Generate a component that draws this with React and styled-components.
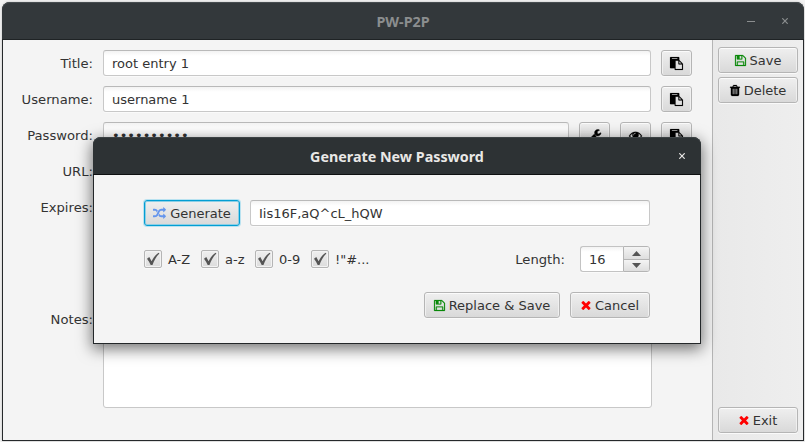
import React from "react";
import styled, { createGlobalStyle } from "styled-components";

const GlobalStyle = createGlobalStyle`
  * { box-sizing: border-box; }
  body { margin: 0; background: #f3f3f3; }
`;

const Desktop = styled.div`
  width: 805px;
  height: 442px;
  padding: 2px 1px 1px 2px;
  overflow: hidden;
  background: #f3f3f3;
  font-family: "DejaVu Sans", sans-serif;
  font-size: 13px;
  color: #333;
`;

const Window = styled.main`
  position: relative;
  width: 802px;
  height: 439px;
  display: flex;
  flex-direction: column;
  border: 1px solid #26292b;
  border-top: 0;
  border-radius: 8px 8px 0 0;
  background: #f4f4f4;
  box-shadow: 0 0 3px rgba(0, 0, 0, 0.22);
`;

const TitleBar = styled.header`
  flex: none;
  height: 38px;
  margin: 0 -1px;
  padding: 0 16px;
  display: grid;
  grid-template-columns: 72px 1fr 72px;
  align-items: center;
  border-radius: 8px 8px 0 0;
  border-bottom: 1px solid ${(p) => (p.$active ? "#0e1011" : "#1f2325")};
  background: ${(p) => (p.$active ? "#2d3234" : "#33383b")};
  box-shadow: inset 0 1px 0 ${(p) => (p.$active ? "#3c4244" : "#474d50")};
  color: ${(p) => (p.$active ? "#e9e8e6" : "#8b8e8f")};
`;

const WindowTitle = styled.h1`
  grid-column: 2;
  margin: 0;
  padding-top: 2px;
  text-align: center;
  white-space: nowrap;
  font: 700 14.3px / 20px "Noto Sans", sans-serif;
`;

const WindowControls = styled.div`
  display: flex;
  justify-content: flex-end;
  align-items: center;
  gap: 27px;
  svg { display: block; }
`;

const Body = styled.div`
  flex: 1;
  min-height: 0;
  display: flex;
`;

const Form = styled.section`
  flex: 1;
  padding: 10px 20px 32px 10px;
  display: flex;
  flex-direction: column;
  gap: 10px;
`;

const Row = styled.div`
  display: flex;
  align-items: center;
  gap: 10px;
  height: ${(p) => (p.$tall ? "178px" : "26px")};
`;

const Label = styled.label`
  flex: none;
  width: ${(p) => p.$width || "80px"};
  padding-top: 1px;
  text-align: right;
  font-size: 13.15px;
  line-height: 19px;
`;

const Field = styled.div`
  flex: 1;
  height: 26px;
  padding: 0 8px;
  display: flex;
  align-items: center;
  border: 1px solid #c8c8c8;
  border-top-color: #b9b9b9;
  border-radius: 3px;
  background: linear-gradient(#f3f3f3, #fff 5px);
  box-shadow: 0 1px 0 #fafafa;
  white-space: pre;
`;

const NotesArea = styled.div`
  width: 549px;
  height: 178px;
  border: 1px solid #c8c8c8;
  border-radius: 3px;
  background: #fff;
`;

const Spacer = styled.div`
  width: ${(p) => p.$width || "31px"};
`;

const Button = styled.button`
  flex: none;
  width: ${(p) => p.$width || "31px"};
  height: 26px;
  margin: 0;
  padding: 0;
  display: flex;
  align-items: center;
  justify-content: center;
  gap: 4px;
  border: 1px solid ${(p) => (p.$focused ? "#039ed3" : "#b5b5b5")};
  border-radius: 3px;
  background: linear-gradient(#efefef, #d9d9d9);
  box-shadow: ${(p) =>
    p.$focused
      ? "0 0 0 1px #b9e2f0, inset 0 0 0 1px #8ccfe6"
      : "inset 0 1px 0 #fbfbfb, inset 1px 0 0 #f0f0f0, inset -1px 0 0 #f0f0f0, 0 1px 0 #fafafa"};
  color: #333;
  font: inherit;
  white-space: nowrap;
  svg { flex: none; }
`;

const Sidebar = styled.aside`
  width: 91px;
  padding: 7px 5px;
  display: flex;
  flex-direction: column;
  gap: 4px;
  border-left: 1px solid #b5b5b5;
  background: linear-gradient(90deg, #e9e9e9, #eeeeee);
`;

const Push = styled.div`
  flex: 1;
`;

const Dialog = styled.section`
  position: absolute;
  left: 90px;
  top: 135px;
  width: 608px;
  height: 207px;
  border: 1px solid #232729;
  border-top: 0;
  border-radius: 8px 8px 0 0;
  background: #f4f4f4;
  box-shadow: 0 4px 15px 1px rgba(0, 0, 0, 0.55);
`;

const DialogBody = styled.div`
  padding: 25px 50px 25px;
  display: flex;
  flex-direction: column;
  gap: 20px;
`;

const DialogRow = styled.div`
  height: 26px;
  display: flex;
  align-items: center;
  justify-content: ${(p) => (p.$end ? "flex-end" : "flex-start")};
  gap: 10px;
`;

const CheckItem = styled.label`
  width: ${(p) => p.$width};
  display: flex;
  align-items: center;
  gap: 6px;
  white-space: nowrap;
`;

const CheckSet = styled.div`
  display: flex;
`;

const CheckBox = styled.span`
  flex: none;
  width: 18px;
  height: 18px;
  display: grid;
  place-items: center;
  border: 1px solid #b5b5b5;
  border-radius: 2px;
  background: linear-gradient(#efefef, #dcdcdc);
  box-shadow: inset 0 0 0 1px #f3f3f3, 0 1px 0 #fafafa;
`;

const Spinner = styled.div`
  width: 70px;
  height: 26px;
  margin-left: 5px;
  display: grid;
  grid-template-columns: 43px 27px;
  box-shadow: 0 1px 0 #fafafa;
`;

const SpinnerValue = styled.div`
  padding-left: 8px;
  display: flex;
  align-items: center;
  border: 1px solid #c3c3c3;
  border-right: 0;
  border-radius: 3px 0 0 3px;
  background: linear-gradient(#f3f3f3, #fff 5px);
`;

const SpinnerButtons = styled.div`
  display: grid;
  grid-template-rows: 1fr 1fr;
  border: 1px solid #b5b5b5;
  border-radius: 0 3px 3px 0;
  overflow: hidden;
`;

const Step = styled.div`
  display: grid;
  place-items: center;
  background: linear-gradient(#f4f4f4, #dedede);
  & + & { border-top: 1px solid #b5b5b5; }
`;

const ICONS = {
  save: "M384 1536h768v-384h-768v384zM1280 1536h128v-896q0 -14 -10 -38.5t-20 -34.5l-281 -281q-10 -10 -34 -20t-39 -10v416q0 40 -28 68t-68 28h-576q-40 0 -68 -28t-28 -68v-416h-128v1280h128v-416q0 -40 28 -68t68 -28h832q40 0 68 28t28 68v416zM896 608v-320q0 -13 -9.5 -22.5t-22.5 -9.5h-192q-13 0-22.5 9.5t-9.5 22.5v320q0 13 9.5 22.5t22.5 9.5h192q13 0 22.5-9.5t9.5-22.5zM1536 640v928q0 40-28 68t-68 28h-1344q-40 0-68-28t-28-68v-1344q0-40 28-68t68-28h928q40 0 88 20t76 48l280 280q28 28 48 76t20 88z",
  times: "M1490 1322q0 40-28 68l-136 136q-28 28-68 28t-68-28l-294-294-294 294q-28 28-68 28t-68-28l-136-136q-28-28-28-68t28-68l294-294-294-294q-28-28-28-68t28-68l136-136q28-28 68-28t68 28l294 294 294-294q28-28 68-28t68 28l136 136q28 28 28 68t-28 68l-294 294 294 294q28 28 28 68z",
  trash: "M704 1376v-704q0-14-9-23t-23-9h-64q-14 0-23 9t-9 23v704q0 14 9 23t23 9h64q14 0 23-9t9-23zm256 0v-704q0-14-9-23t-23-9h-64q-14 0-23 9t-9 23v704q0 14 9 23t23 9h64q14 0 23-9t9-23zm256 0v-704q0-14-9-23t-23-9h-64q-14 0-23 9t-9 23v704q0 14 9 23t23 9h64q14 0 23-9t9-23zm-544-992h448l-48-117q-7-9-17-11h-317q-10 2-17 11zm928 32v64q0 14-9 23t-23 9h-96v948q0 83-47 143.500t-113 60.500h-832q-66 0-113-58.500t-47-141.500v-952h-96q-14 0-23-9t-9-23v-64q0-14 9-23t23-9h309l70-167q15-37 54-63t79-26h320q40 0 79 26t54 63l70 167h309q14 0 23 9t9 23z",
  random: "M666 481q-60 92-137 273-22-45-37-72.500t-40.500-63.500-51-56.500-63-35-81.500-14.500h-224q-14 0-23-9t-9-23v-192q0-14 9-23t23-9h224q250 0 410 225zm1126 799q0 14-9 23l-320 320q-9 9-23 9-13 0-22.500-9.500t-9.500-22.500v-192q-32 0-85 .5t-81 1-73-1-71-5-64-10.500-63-18.500-58-28.500-59-40-55-53.500-56-69.500q59-93 136-273 22 45 37 72.500t40.500 63.500 51 56.500 63 35 81.500 14.500h256v-192q0-14 9-23t23-9q12 0 24 10l319 319q9 9 9 23zm0-896q0 14-9 23l-320 320q-9 9-23 9-13 0-22.500-9.500t-9.500-22.500v-192h-256q-48 0-87 15t-69 45-51 61.500-45 77.500q-32 62-78 171-29 66-49.500 111t-54 105-64 100-74 83-90 68.500-106.500 42-128 16.500h-224q-14 0-23-9t-9-23v-192q0-14 9-23t23-9h224q48 0 87-15t69-45 51-61.500 45-77.500q32-62 78-171 29-66 49.500-111t54-105 64-100 74-83 90-68.500 106.500-42 128-16.500h256v-192q0-14 9-23t23-9q12 0 24 10l319 319q9 9 9 23z",
  paste: "M768 1664h896v-640h-416q-40 0-68-28t-28-68v-416h-384v1152zm256-1440v-64q0-13-9.500-22.500t-22.500-9.500h-704q-13 0-22.500 9.500t-9.500 22.500v64q0 13 9.500 22.500t22.500 9.500h704q13 0 22.500-9.500t9.500-22.500zm256 672h299l-299-299v299zm512 128v672q0 40-28 68t-68 28h-960q-40 0-68-28t-28-68v-160h-544q-40 0-68-28t-28-68v-1344q0-40 28-68t68-28h1088q40 0 68 28t28 68v328q21 13 36 28l408 408q28 28 48 76t20 88z",
  wrench: "M448 1472q0-26-19-45t-45-19-45 19-19 45 19 45 45 19 45-19 19-45zm644-420l-682 682q-37 37-90 37-52 0-91-37l-106-108q-38-36-38-90 0-53 38-91l681-681q39 98 114.500 173.500t173.500 114.500zm634-435q0 39-23 106-47 134-164.500 217.500t-258.500 83.500q-185 0-316.500-131.500t-131.500-316.500 131.500-316.500 316.500-131.500q58 0 121.500 16.500t107.500 46.500q16 11 16 28t-16 28l-293 169v224l193 107q5-3 79-48.500t135.500-81 70.500-35.500q15 0 23.500 10t8.500 25z",
  eye: "M1664 960q-152-236-381-353 61 104 61 225 0 185-131.500 316.500t-316.500 131.500-316.500-131.500-131.500-316.500q0-121 61-225-229 117-381 353 133 205 333.500 326.500t434.500 121.500 434.500-121.500 333.500-326.500zm-720-384q0-20-14-34t-34-14q-125 0-214.500 89.500t-89.500 214.500q0 20 14 34t34 14 34-14 14-34q0-86 61-147t147-61q20 0 34-14t14-34zm848 384q0 34-20 69-140 230-376.500 368.500t-499.500 138.500-499.500-139-376.500-368q-20-35-20-69t20-69q140-229 376.500-368t499.500-139 499.500 139 376.500 368q20 35 20 69z",
};

const BOXES = {
  save: [0, 128, 1536, 1536],
  times: [302, 238, 1188, 1316],
  trash: [192, 128, 1408, 1536],
  random: [0, 160, 1792, 1472],
  paste: [0, 0, 1792, 1792],
  wrench: [64, 64, 1664, 1664],
  eye: [0, 128, 1792, 1536],
};

const Icon = ({ name, width, height, color = "#000", weight = 0 }) => (
  <svg
    width={width}
    height={height}
    viewBox={BOXES[name].join(" ")}
    fill={color}
    stroke={color}
    strokeWidth={weight}
    overflow="visible"
    aria-hidden="true"
  >
    <path d={ICONS[name]} />
  </svg>
);

const PasteButton = () => (
  <Button aria-label="Copy">
    <Icon name="paste" width={13} height={13} weight={20} />
  </Button>
);

const CloseGlyph = () => (
  <svg width="6" height="6" viewBox="0 0 6 6" stroke="currentColor" strokeWidth="1.2" aria-hidden="true">
    <path d="M.3.3l5.400 5.400M5.700.3L.3 5.700" />
  </svg>
);

const Check = ({ text, width }) => (
  <CheckItem $width={width}>
    <CheckBox>
      <svg width="14" height="14" viewBox="0 0 14 14" fill="#555" aria-hidden="true">
        <path d="M1 6.800l2.300-1.700 2.300 4.200C7.300 5.700 9.600 2.700 12.600.8l.8.6C10.400 4.500 8.200 8.300 6.500 13H4.700C3.700 10.700 2.500 8.700 1 6.800z" />
      </svg>
    </CheckBox>
    {text}
  </CheckItem>
);

const Arrow = ({ down }) => (
  <svg width="9" height="5" viewBox="0 0 9 5" fill="#555" aria-hidden="true">
    <path d={down ? "M0 0h9L4.500 5z" : "M0 5h9L4.500 0z"} />
  </svg>
);

export default function App() {
  return (
    <Desktop>
      <GlobalStyle />
      <Window>
        <TitleBar>
          <WindowTitle>PW-P2P</WindowTitle>
          <WindowControls>
            <svg width="8" height="2" viewBox="0 0 8 2" aria-hidden="true">
              <path d="M0 1.500h8" stroke="currentColor" />
            </svg>
            <CloseGlyph />
          </WindowControls>
        </TitleBar>
        <Body>
          <Form>
            <Row>
              <Label>Title:</Label>
              <Field>root entry 1</Field>
              <PasteButton />
            </Row>
            <Row>
              <Label>Username:</Label>
              <Field>username 1</Field>
              <PasteButton />
            </Row>
            <Row>
              <Label>Password:</Label>
              <Field>••••••••••</Field>
              <Button aria-label="Generate password">
                <Icon name="wrench" width={12} height={12} weight={60} />
              </Button>
              <Button aria-label="Show password">
                <Icon name="eye" width={13} height={11} weight={30} />
              </Button>
              <PasteButton />
            </Row>
            <Row>
              <Label>URL:</Label>
              <Field />
              <Spacer />
            </Row>
            <Row>
              <Label>Expires:</Label>
            </Row>
            <Row $tall>
              <Label>Notes:</Label>
              <NotesArea />
            </Row>
          </Form>
          <Sidebar>
            <Button $width="80px">
              <Icon name="save" width={11} height={11} color="#0a8a0a" weight={30} />
              Save
            </Button>
            <Button $width="80px">
              <Icon name="trash" width={10} height={11} weight={30} />
              Delete
            </Button>
            <Push />
            <Button $width="80px">
              <Icon name="times" width={10} height={10} color="#f00" />
              Exit
            </Button>
          </Sidebar>
        </Body>
        <Dialog role="dialog">
          <TitleBar $active>
            <WindowTitle>Generate New Password</WindowTitle>
            <WindowControls>
              <CloseGlyph />
            </WindowControls>
          </TitleBar>
          <DialogBody>
            <DialogRow>
              <Button $width="96px" $focused>
                <Icon name="random" width={13} height={11} color="#6495ed" />
                Generate
              </Button>
              <Field>Iis16F,aQ^cL_hQW</Field>
            </DialogRow>
            <DialogRow>
              <CheckSet>
                <Check text="A-Z" width="57px" />
                <Check text="a-z" width="54px" />
                <Check text="0-9" width="56px" />
                <Check text={'!"#...'} width="60px" />
              </CheckSet>
              <Push />
              <Label $width="auto">Length:</Label>
              <Spinner>
                <SpinnerValue>16</SpinnerValue>
                <SpinnerButtons>
                  <Step><Arrow /></Step>
                  <Step><Arrow down /></Step>
                </SpinnerButtons>
              </Spinner>
            </DialogRow>
            <DialogRow $end>
              <Button $width="136px">
                <Icon name="save" width={11} height={11} color="#0a8a0a" weight={30} />
                Replace &amp; Save
              </Button>
              <Button $width="80px">
                <Icon name="times" width={10} height={10} color="#f00" />
                Cancel
              </Button>
            </DialogRow>
          </DialogBody>
        </Dialog>
      </Window>
    </Desktop>
  );
}
